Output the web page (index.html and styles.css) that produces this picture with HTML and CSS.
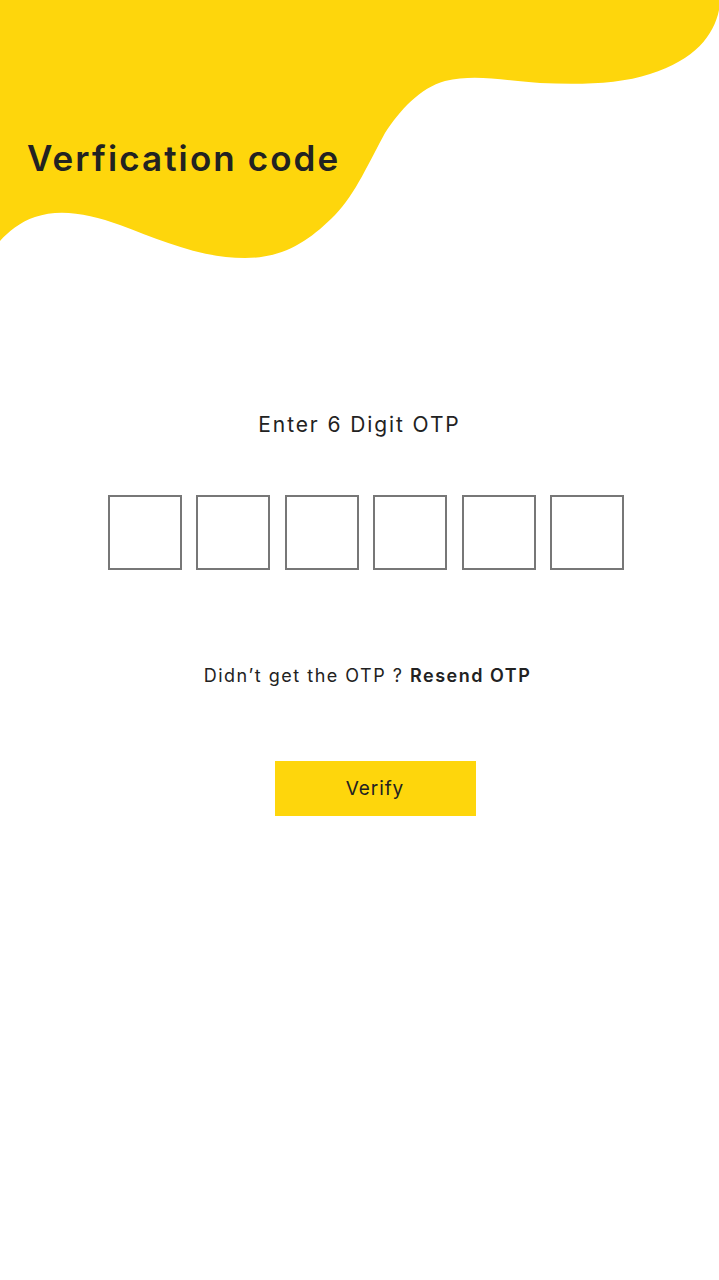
FILE: index.html
```html
<!DOCTYPE html>
<html lang="en">
<head>
<meta charset="utf-8">
<title>Verification code</title>
<link rel="stylesheet" href="styles.css">
</head>
<body>
<div class="screen">
  <header class="hero">
    <svg class="wave" viewBox="0 0 719 270" width="719" height="270" aria-hidden="true">
      <path d="M0,0 H719 V10 C714,35 695,60 650,74 C620,84 580,85 540,83 C500,80 475,74 445,81 C420,88 400,110 385,133 C370,160 355,195 335,215 C310,240 285,258 245,258 C200,258 160,240 120,225 C90,214 60,208 35,217 C20,222 8,232 0,241 Z" fill="#FED60C"/>
    </svg>
    <h1 class="title">Verfication code</h1>
  </header>
  <main class="content">
    <p class="prompt">Enter 6 Digit OTP</p>
    <div class="otp">
      <span class="box"></span>
      <span class="box"></span>
      <span class="box"></span>
      <span class="box"></span>
      <span class="box"></span>
      <span class="box"></span>
    </div>
    <p class="resend">Didn’t get the OTP ? <strong>Resend OTP</strong></p>
    <button class="verify" type="button">Verify</button>
  </main>
</div>
</body>
</html>
```
FILE: styles.css
```css
html, body {
  margin: 0;
  padding: 0;
  background: #ffffff;
}
body {
  font-family: Inter, "Noto Sans", "Liberation Sans", sans-serif;
  color: #222222;
}
.screen {
  width: 719px;
  min-height: 1280px;
  display: flex;
  flex-direction: column;
}
.hero {
  position: relative;
  height: 270px;
}
.wave {
  position: absolute;
  left: 0;
  top: 0;
  display: block;
}
.title {
  position: relative;
  margin: 0;
  padding: 136px 0 0 27px;
  font-size: 35px;
  font-weight: 600;
  line-height: 44px;
  letter-spacing: 2.1px;
  color: #222222;
}
.content {
  display: flex;
  flex-direction: column;
  align-items: center;
}
.prompt {
  margin: 140px 0 0;
  font-size: 21px;
  line-height: 30px;
  letter-spacing: 1.9px;
  color: #222222;
}
.otp {
  margin-top: 55px;
  display: flex;
  gap: 14.4px;
  padding-left: 13px;
}
.box {
  width: 70px;
  height: 71px;
  border: 2px solid #777777;
  display: block;
}
.resend {
  margin: 93px 0 0;
  padding-left: 16px;
  font-size: 18px;
  line-height: 26px;
  letter-spacing: 1.5px;
  color: #222222;
}
.resend strong {
  font-weight: 600;
}
.verify {
  margin-top: 72px;
  margin-left: 31px;
  width: 201px;
  height: 55px;
  border: 0;
  border-radius: 0;
  background: #FED60C;
  font-family: inherit;
  font-size: 19px;
  letter-spacing: 0.9px;
  color: #222222;
  padding: 0;
}
```
